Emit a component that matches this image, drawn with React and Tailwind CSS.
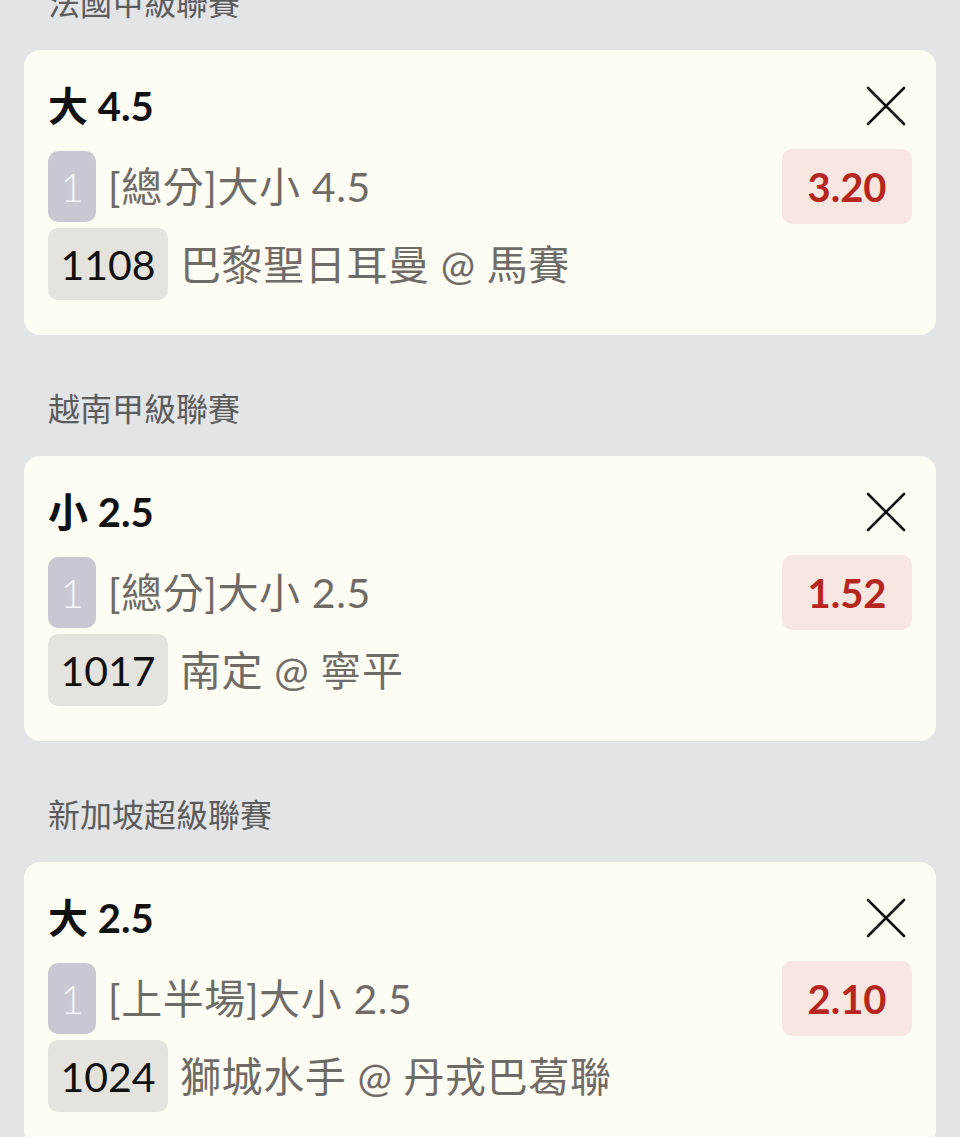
import React from 'react'

const FONT = { fontFamily: 'Lato, "Noto Sans CJK TC", "Noto Sans", sans-serif' }

const bets = [
  { league: '法國甲級聯賽', pick: '大 4.5', market: '[總分]大小 4.5', odds: '3.20', num: '1108', match: '巴黎聖日耳曼 @ 馬賽' },
  { league: '越南甲級聯賽', pick: '小 2.5', market: '[總分]大小 2.5', odds: '1.52', num: '1017', match: '南定 @ 寧平' },
  { league: '新加坡超級聯賽', pick: '大 2.5', market: '[上半場]大小 2.5', odds: '2.10', num: '1024', match: '獅城水手 @ 丹戎巴葛聯' },
]

function CloseIcon() {
  return (
    <svg width="40" height="40" viewBox="0 0 40 40" className="mr-[6px]">
      <path d="M2 2 L38 38 M38 2 L2 38" stroke="#111" strokeWidth="2.6" strokeLinecap="round" fill="none" />
    </svg>
  )
}

function BetCard({ bet }) {
  return (
    <div className="rounded-[16px] bg-[#fefdf4] px-[24px] pt-[26px] pb-[35px]">
      {/* Title */}
      <div className="flex h-[60px] items-center justify-between">
        <span className="text-[40px] font-bold leading-none text-[#111]">{bet.pick}</span>
        <CloseIcon />
      </div>

      {/* Market + odds */}
      <div className="mt-[13px] flex h-[75px] items-center justify-between">
        <div className="flex items-center gap-3">
          <span className="flex h-[71px] w-[48px] items-center justify-center rounded-[10px] bg-[#c9c8d2] text-[40px] font-light leading-none text-[#f6f6f8]">
            1
          </span>
          <span className="text-[41px] leading-none tracking-[0.6px] text-[#6f6b67]">{bet.market}</span>
        </div>
        <span className="flex h-[75px] w-[130px] items-center justify-center rounded-[10px] bg-[#f8e6e0] text-[40px] font-bold leading-none text-[#b5261e]">
          {bet.odds}
        </span>
      </div>

      {/* Match */}
      <div className="mt-[4px] flex items-center gap-3">
        <span className="flex h-[72px] w-[120px] items-center justify-center rounded-[10px] bg-[#e5e3dd] text-[41px] leading-none text-[#111]">
          {bet.num}
        </span>
        <span className="text-[41px] leading-none tracking-[0.6px] text-[#6f6b67]">{bet.match}</span>
      </div>
    </div>
  )
}

export default function App() {
  return (
    <div className="min-h-[1137px] w-[960px] overflow-hidden bg-[#fefdf4]" style={FONT}>
      <div className="min-h-[1137px] rounded-t-[14px] bg-[#e3e4e6] px-[24px]">
        {bets.map((bet, i) => (
          <div key={bet.num}>
            <div
              className={`${i === 0 ? '-mt-[17px]' : 'mt-[54px]'} mb-[27px] flex h-[40px] items-center pl-[24px] text-[32px] leading-none text-[#5c5c5c]`}
            >
              {bet.league}
            </div>
            <BetCard bet={bet} />
          </div>
        ))}
      </div>
    </div>
  )
}
